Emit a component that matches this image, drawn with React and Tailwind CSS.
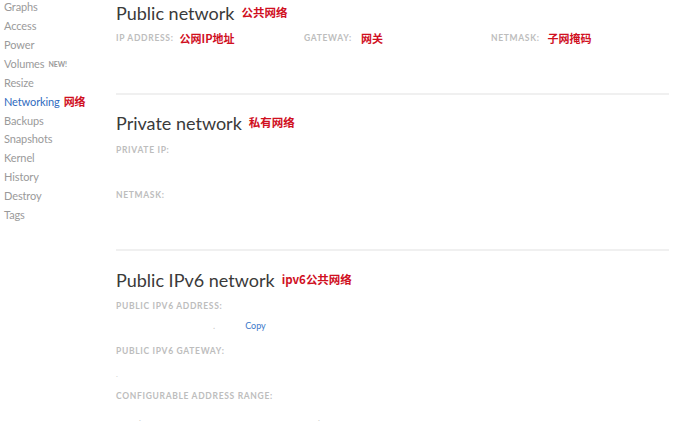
const NAV = ['Graphs', 'Access', 'Power', 'Volumes', 'Resize', 'Networking', 'Backups', 'Snapshots', 'Kernel', 'History', 'Destroy', 'Tags'];

const cjk = { fontFamily: '"Noto Sans CJK SC", sans-serif' };

function Note({ children, className = '' }) {
  return (
    <span className={`font-bold leading-none text-[#d0101f] ${className}`} style={cjk}>
      {children}
    </span>
  );
}

function Label({ children, className = '' }) {
  return (
    <span className={`text-[8.5px] font-bold uppercase leading-none tracking-[0.08em] text-[#bdbdbd] ${className}`}>
      {children}
    </span>
  );
}

function Title({ children, note }) {
  return (
    <div className="flex h-[26px] items-center">
      <span className="text-[18px] leading-none text-[#3a3a3a]">{children}</span>
      <Note className="ml-[7px] text-[11.5px]">{note}</Note>
    </div>
  );
}

export default function App() {
  return (
    <div className="flex h-[429px] w-[700px] overflow-hidden bg-white" style={{ fontFamily: 'Lato, "Open Sans", sans-serif' }}>
      {/* side menu */}
      <div className="mt-[-2px] flex w-[116px] shrink-0 flex-col pl-[4px]">
        {NAV.map(item => (
          <div key={item} className="flex h-[18.9px] items-center text-[11px] tracking-[-0.01em]">
            {item === 'Networking' ? (
              <>
                <span className="text-[#2f6bc0]">{item}</span>
                <Note className="ml-[4px] text-[11px]">网络</Note>
              </>
            ) : (
              <span className="text-[#9a9a9a]">{item}</span>
            )}
            {item === 'Volumes' && (
              <span className="ml-[4px] text-[7px] font-bold text-[#9a9a9a]">NEW!</span>
            )}
          </div>
        ))}
      </div>

      {/* main */}
      <div className="flex w-[553px] flex-col">
        <Title note="公共网络">Public network</Title>
        <div className="mt-[6px] grid h-[12px] grid-cols-[188px_187px_1fr] items-center">
          <div className="flex h-[12px] items-center">
            <Label>IP Address:</Label>
            <Note className="ml-[6px] text-[11px]">公网IP地址</Note>
          </div>
          <div className="flex h-[12px] items-center">
            <Label>Gateway:</Label>
            <Note className="ml-[9px] text-[11px]">网关</Note>
          </div>
          <div className="flex h-[12px] items-center">
            <Label>Netmask:</Label>
            <Note className="ml-[8px] text-[11px]">子网掩码</Note>
          </div>
        </div>
        <div className="mt-[49px] h-[2px] bg-[#f0f0f0]" />

        <div className="mt-[15px]">
          <Title note="私有网络">Private network</Title>
        </div>
        <div className="mt-[8px] flex h-[12px] items-center"><Label>Private IP:</Label></div>
        <div className="mt-[33px] flex h-[12px] items-center"><Label>Netmask:</Label></div>
        <div className="mt-[48px] h-[2px] bg-[#f0f0f0]" />

        <div className="mt-[16px]">
          <Title note="ipv6公共网络">Public IPv6 network</Title>
        </div>
        <div className="mt-[7px] flex h-[12px] items-center"><Label>Public IPv6 Address:</Label></div>
        <div className="mt-[7px] flex h-[12px] items-center text-[9px] leading-none">
          <span className="ml-[97px] text-[#c8c8c8]">.</span>
          <span className="ml-[30px] text-[#3a78c9]">Copy</span>
        </div>
        <div className="mt-[14px] flex h-[12px] items-center"><Label>Public IPv6 Gateway:</Label></div>
        <div className="mt-[11px] flex h-[12px] items-center text-[8px] leading-none text-[#d0d0d0]">.</div>
        <div className="mt-[10px] flex h-[12px] items-center"><Label>Configurable Address Range:</Label></div>
        <div className="mt-[10px] flex h-[12px] items-center text-[8px] leading-none text-[#c8c8c8]">
          <span className="ml-[23px]">.</span>
          <span className="ml-[177px]">.</span>
        </div>
      </div>
    </div>
  );
}
